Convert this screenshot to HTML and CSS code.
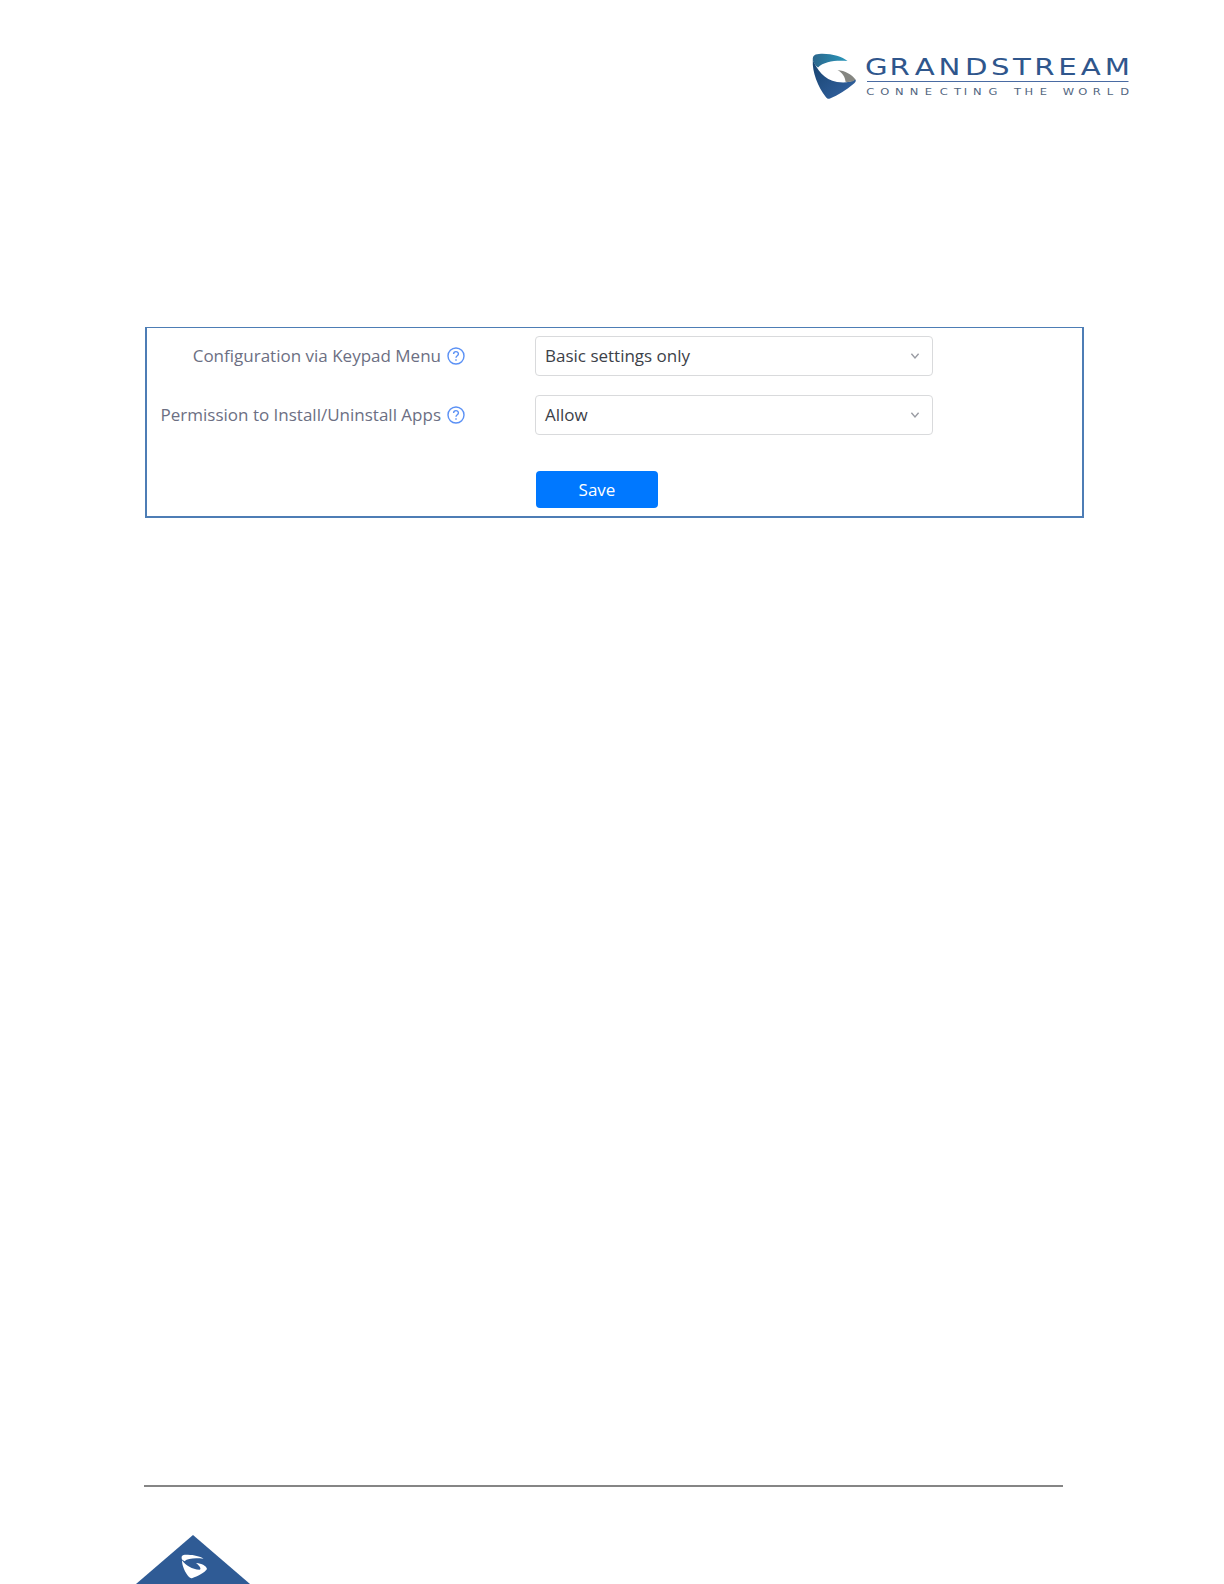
FILE: index.html
```
<!DOCTYPE html>
<html lang="en">
<head>
    <meta charset="UTF-8">
    <meta name="viewport" content="width=device-width, initial-scale=1.0">
    <title>Grandstream</title>
    <link rel="stylesheet" href="styles.css">
</head>
<body>
    <header class="header">
        <svg class="logo" width="324" height="56" viewBox="805 48 324 56">
            <defs>
                <linearGradient id="top" x1="0" y1="0" x2="1" y2="0">
                    <stop offset="0" stop-color="#2c668c"/>
                    <stop offset="1" stop-color="#2998bb"/>
                </linearGradient>
                <linearGradient id="side" x1="0" y1="0" x2="1" y2="1">
                    <stop offset="0" stop-color="#17436f"/>
                    <stop offset="1" stop-color="#3564a4"/>
                </linearGradient>
            </defs>
            <path fill="url(#side)" d="M812.8 60 C817 69 824 80 837 82 C844 83 850 82.500 855.500 79.500 C856.300 81 855.500 82 854 83.500 C846 90 838 95.500 830 98.500 C828 99.200 827 98.500 825.800 97 C818 87 812 72 812.800 60Z"/>
            <path fill="url(#top)" d="M812.8 60 C812.500 55.500 815 54 821 53.800 C832 53.500 842 56.500 847.500 61 C837 60 824 61 818 67.500 C815.500 65.500 813.500 63 812.800 60Z"/>
            <path fill="#858681" d="M837.5 70 C845 70.800 852 74.500 855.500 79.500 C853.500 81.700 849.500 82.300 845.500 81.800 C845.300 77 842 72.500 837.500 70Z"/>
            <text class="logo-name" transform="scale(1.3 1)" y="74.8" x="665.4 684.2 703.6 721.9 742.4 762.3 779.2 795.5 814 831.3 849.8">GRANDSTREAM</text>
            <rect class="logo-line" x="867" y="81" width="261.500" height="1"/>
            <g class="logo-tag" transform="scale(1.25 1)">
                <text y="94.700" x="693.1 704.3 715.9 727.9 739.9 751.9 763.2 771.1 778.5 790.9">CONNECTING</text>
                <text y="94.700" x="811.2 819.7 831.9">THE</text>
                <text y="94.700" x="850.2 862.7 874.3 885.5 896.2">WORLD</text>
            </g>
        </svg>
    </header>

    <form class="settings">
        <div class="row">
            <label class="row-label" for="keypad">Configuration via Keypad Menu</label>
            <svg class="help" width="18" height="18" viewBox="0 0 18 18">
                <circle cx="9" cy="9" r="8"/>
                <path d="M6.600 7.100 C6.600 3.800 11.400 3.900 11.400 6.900 C11.400 8.700 9 8.700 9 10.800 M9 12.300 V13.700"/>
            </svg>
            <div class="select" id="keypad">
                <span>Basic settings only</span>
                <svg class="arrow" width="10" height="8" viewBox="0 0 10 8"><path d="M1.400 1.800 L5 6 L8.600 1.800"/></svg>
            </div>
        </div>
        <div class="row">
            <label class="row-label" for="apps">Permission to Install/Uninstall Apps</label>
            <svg class="help" width="18" height="18" viewBox="0 0 18 18">
                <circle cx="9" cy="9" r="8"/>
                <path d="M6.600 7.100 C6.600 3.800 11.400 3.900 11.400 6.900 C11.400 8.700 9 8.700 9 10.800 M9 12.300 V13.700"/>
            </svg>
            <div class="select" id="apps">
                <span>Allow</span>
                <svg class="arrow" width="10" height="8" viewBox="0 0 10 8"><path d="M1.400 1.800 L5 6 L8.600 1.800"/></svg>
            </div>
        </div>
        <button type="button" class="save">Save</button>
    </form>

    <footer class="footer">
        <svg class="corner" width="114" height="49" viewBox="136 1535 114 49">
            <path fill="#2f5b95" d="M193 1535 L250 1584 H136Z"/>
            <path fill="#fff" d="M182 1559.500 C180.500 1554.500 184 1554.500 188 1554.800 C194 1555 200 1556.300 203.500 1558.800 C196 1558 188 1558 184.500 1561.300Z"/>
            <path fill="#fff" d="M182 1560.300 C186 1565.500 192 1569.500 199.500 1569.700 C201.500 1569.500 200.500 1566.500 196 1563 C202 1563.500 206.500 1566 207 1569 C205 1572.500 197 1576.500 192.500 1578 C191 1578.500 190 1578 189 1577 C185 1572.500 182 1566 182 1560.300Z"/>
        </svg>
    </footer>
</body>
</html>
```
FILE: styles.css
```
* {
    box-sizing: border-box;
}
body {
    margin: 0;
    height: 1584px;
    display: flex;
    flex-direction: column;
    background-color: #fff;
    font-family: "Open Sans", "Noto Sans", sans-serif;
    overflow: hidden;
}

/* Header logo */
.header {
    display: flex;
    justify-content: flex-end;
    padding: 48px 95px 0 0;
    height: 327px;
}
.logo-name {
    font-family: "DejaVu Sans", sans-serif;
    font-size: 22.5px;
    fill: #2f568c;
}
.logo-tag {
    font-family: "DejaVu Sans", sans-serif;
    font-size: 9.2px;
    fill: #526580;
}
.logo-line {
    fill: #4a6ba3;
}

/* Settings panel */
.settings {
    width: 939px;
    height: 191px;
    margin-left: 145px;
    padding-top: 8px;
    border: 2px solid #4d7db5;
    border-top-width: 1px;
    font-size: 17px;
}
.row {
    display: flex;
    align-items: center;
    height: 40px;
    margin-bottom: 19px;
}
.row-label {
    width: 294px;
    padding-bottom: 2px;
    text-align: right;
    color: #6c6f83;
    white-space: nowrap;
}
.help {
    margin: 0 70px 0 6px;
    fill: none;
    stroke: #5b91f5;
    stroke-width: 1.4;
}
.select {
    display: flex;
    align-items: center;
    justify-content: space-between;
    width: 398px;
    height: 40px;
    padding: 0 12px 0 9px;
    border: 1px solid #d9dadc;
    border-radius: 4px;
    color: #3c4148;
}
.select span {
    padding-bottom: 2px;
}
.arrow {
    fill: none;
    stroke: #9a9ca3;
    stroke-width: 1.4;
}
.save {
    display: block;
    width: 122px;
    height: 37px;
    margin: 36px 0 0 389px;
    padding: 0;
    border: none;
    border-radius: 4px;
    background-color: #0078ff;
    color: #fff;
    font-family: inherit;
    font-size: 17px;
}

/* Page footer */
.footer {
    display: flex;
    align-items: flex-end;
    width: 919px;
    height: 99px;
    margin: auto 0 0 144px;
    border-top: 2px solid #858585;
}
.corner {
    flex: none;
    margin-left: -8px;
}
```
